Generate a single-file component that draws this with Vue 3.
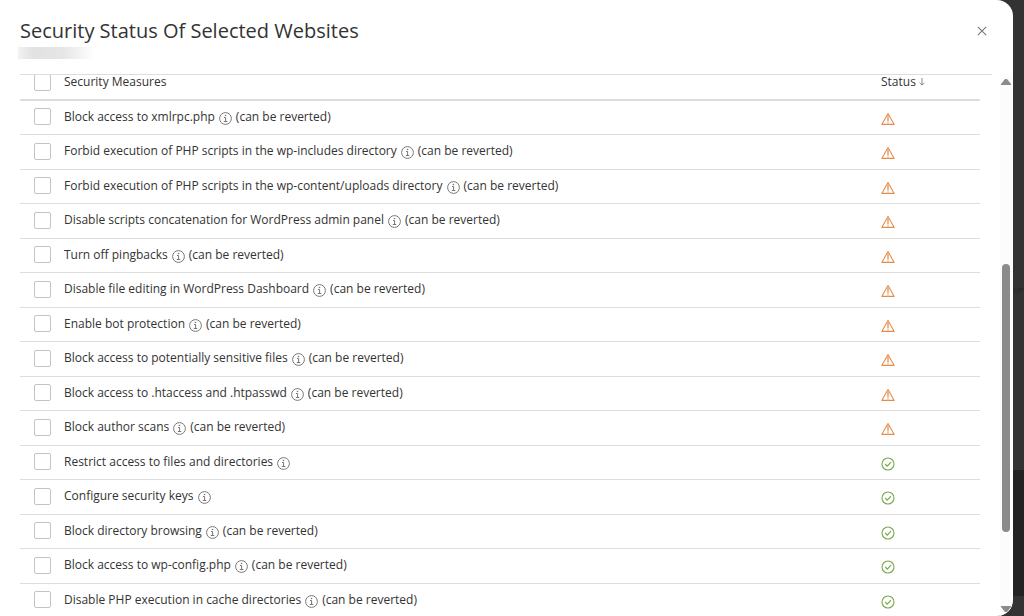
<template>
  <div class="backdrop">
    <section class="dialog" role="dialog" aria-labelledby="dialog-title">
      <header class="dialog-header">
        <div class="heading">
          <h1 id="dialog-title">Security Status Of Selected Websites</h1>
          <div class="site-name"></div>
        </div>
        <button type="button" class="btn-close" aria-label="Close">
          <svg width="10" height="10" viewBox="0 0 10 10" fill="none">
            <path d="M0.8 0.8L9.2 9.2M9.2 0.8L0.8 9.2" stroke="#777" stroke-width="1.1"/>
          </svg>
        </button>
      </header>

      <div class="dialog-body">
        <div class="table-wrapper">
          <table>
            <thead>
              <tr>
                <th class="col-check">
                  <input type="checkbox" v-model="allSelected" aria-label="Select all">
                </th>
                <th>Security Measures</th>
                <th class="col-status">
                  Status
                  <svg class="sort-icon" width="6" height="8" viewBox="0 0 6 8" fill="none">
                    <path d="M3 0V7M0.6 4.8L3 7.2L5.4 4.8" stroke="#888"/>
                  </svg>
                </th>
              </tr>
            </thead>
            <tbody>
              <tr v-for="measure in measures" :key="measure.id">
                <td class="col-check">
                  <input type="checkbox" :id="measure.id" :value="measure.id" v-model="selected">
                </td>
                <td>
                  <label :for="measure.id">{{ measure.title }}</label>
                  <svg class="info-icon" width="13" height="13" viewBox="0 0 13 13" fill="none">
                    <circle cx="6.5" cy="6.5" r="5.9" stroke="#777"/>
                    <path d="M5 5.5H6.6V9.5M4.8 9.5H8.3" stroke="#777"/>
                    <circle cx="6.5" cy="3.5" r="0.8" fill="#777"/>
                  </svg>
                  <span v-if="measure.revertible">(can be reverted)</span>
                </td>
                <td class="col-status">
                  <svg v-if="measure.secured" class="status-icon" width="14" height="14" viewBox="0 0 14 14" fill="none">
                    <circle cx="7" cy="7" r="6" stroke="#79a94c" stroke-width="1.1"/>
                    <path d="M4.2 7L6.3 9.1L10 5.2" stroke="#79a94c" stroke-width="1.2"/>
                  </svg>
                  <svg v-else class="status-icon" width="14" height="14" viewBox="0 0 14 14" fill="none">
                    <path d="M7 1.5L13.2 12.4H0.8Z" stroke="#e58e4b" stroke-width="1.1" stroke-linejoin="round"/>
                    <path d="M7 3.5V9.6M7 10.4V11.6" stroke="#e58e4b" stroke-width="1.3"/>
                  </svg>
                </td>
              </tr>
            </tbody>
          </table>
        </div>

        <div class="scrollbar">
          <svg width="10" height="6" viewBox="0 0 10 6"><path d="M4 0H6L10 5V6H0V5Z" fill="#8b8b8b"/></svg>
          <div class="space-before"></div>
          <div class="thumb"></div>
          <div class="space-after"></div>
          <svg width="10" height="6" viewBox="0 0 10 6"><path d="M4 6H6L10 1V0H0V1Z" fill="#8b8b8b"/></svg>
        </div>
      </div>
    </section>

    <aside class="page-behind">
      <div class="behind-top"><span>UP</span></div>
      <div class="behind-panel"></div>
    </aside>
  </div>
</template>

<script setup>
import { ref, computed } from 'vue'

const measures = [
  { id: 'xmlrpc', title: 'Block access to xmlrpc.php', revertible: true, secured: false },
  { id: 'wp-includes', title: 'Forbid execution of PHP scripts in the wp-includes directory', revertible: true, secured: false },
  { id: 'wp-content', title: 'Forbid execution of PHP scripts in the wp-content/uploads directory', revertible: true, secured: false },
  { id: 'concatenation', title: 'Disable scripts concatenation for WordPress admin panel', revertible: true, secured: false },
  { id: 'pingbacks', title: 'Turn off pingbacks', revertible: true, secured: false },
  { id: 'file-editing', title: 'Disable file editing in WordPress Dashboard', revertible: true, secured: false },
  { id: 'bot-protection', title: 'Enable bot protection', revertible: true, secured: false },
  { id: 'sensitive-files', title: 'Block access to potentially sensitive files', revertible: true, secured: false },
  { id: 'htaccess', title: 'Block access to .htaccess and .htpasswd', revertible: true, secured: false },
  { id: 'author-scans', title: 'Block author scans', revertible: true, secured: false },
  { id: 'files', title: 'Restrict access to files and directories', revertible: false, secured: true },
  { id: 'security-keys', title: 'Configure security keys', revertible: false, secured: true },
  { id: 'browsing', title: 'Block directory browsing', revertible: true, secured: true },
  { id: 'wp-config', title: 'Block access to wp-config.php', revertible: true, secured: true },
  { id: 'cache', title: 'Disable PHP execution in cache directories', revertible: true, secured: true }
]

const selected = ref([])

const allSelected = computed({
  get: () => selected.value.length === measures.length,
  set: (value) => {
    selected.value = value ? measures.map((m) => m.id) : []
  }
})
</script>

<style>
body {
  margin: 0;
  background: #333;
}
</style>

<style scoped>
* {
  box-sizing: border-box;
}

.backdrop {
  display: flex;
  height: 100vh;
  overflow: hidden;
  background: #333;
  font-family: 'Open Sans', 'Noto Sans', sans-serif;
  font-size: 12px;
  line-height: 20px;
  color: #333;
}

.dialog {
  flex: 1;
  min-width: 0;
  display: flex;
  flex-direction: column;
  background: #fff;
  border-radius: 0 16px 16px 0;
  overflow: hidden;
}

.dialog-header {
  display: flex;
  justify-content: space-between;
  align-items: flex-start;
  height: 74px;
  flex-shrink: 0;
  padding: 17px 24px 0 20px;
}

h1 {
  margin: 0;
  font-size: 20px;
  line-height: 28px;
  font-weight: 400;
  color: #333;
}

/* Redacted domain */
.site-name {
  width: 76px;
  height: 12px;
  margin: 2px 0 0 -2px;
  background: linear-gradient(90deg, #f2f2f2, #e2e2e2 20%, #e6e6e6 60%, #fff);
}

.btn-close {
  display: flex;
  align-items: center;
  justify-content: center;
  width: 14px;
  height: 28px;
  padding: 0;
  border: none;
  background: none;
  cursor: pointer;
}

.dialog-body {
  flex: 1;
  min-height: 0;
  display: flex;
  justify-content: space-between;
  gap: 8px;
  padding: 0 1px 0 20px;
}

.table-wrapper {
  flex: 1;
  padding-right: 12px;
  border-top: 1px solid #ddd;
  overflow: hidden;
}

/* The list is scrolled, so the top of the header row is cut off */
table {
  width: 100%;
  margin-top: -10px;
  border-collapse: separate;
  border-spacing: 0;
}

th,
td {
  height: 34px;
  padding: 0 0 2px;
  border-bottom: 1px solid #ddd;
  text-align: left;
  font-weight: 400;
  vertical-align: middle;
  white-space: nowrap;
}

th {
  height: 36px;
  padding-bottom: 0;
  border-bottom-width: 2px;
}

tbody tr:nth-child(even) td {
  height: 35px;
}

.col-check {
  width: 44px;
  padding-left: 14px;
}

.col-status {
  width: 99px;
}

input[type="checkbox"] {
  display: block;
  appearance: none;
  width: 17px;
  height: 17px;
  margin: 0;
  border: 1px solid #c4c4c4;
  border-radius: 2px;
  background: #fff;
}

input[type="checkbox"]:checked {
  background: #28aade;
}

.info-icon {
  margin: 0 4px;
  vertical-align: -4px;
}

.status-icon {
  display: block;
  margin-top: 4px;
}

.scrollbar {
  width: 12px;
  display: flex;
  flex-direction: column;
  align-items: center;
  padding: 5px 0 4px;
  background: #fcfcfc;
}

.scrollbar svg {
  flex-shrink: 0;
}

.space-before {
  flex: 179;
}

.thumb {
  flex: 267;
  width: 8px;
  border-radius: 4px;
  background: #8b8b8b;
}

.space-after {
  flex: 74;
}

.page-behind {
  width: 11px;
  display: flex;
  flex-direction: column;
  padding-bottom: 20px;
}

.behind-top {
  flex: 470;
  display: flex;
  align-items: center;
  font-size: 8px;
  color: #222;
}

.behind-top span {
  padding-top: 110px;
}

.behind-panel {
  flex: 126;
  background: #222;
}
</style>
